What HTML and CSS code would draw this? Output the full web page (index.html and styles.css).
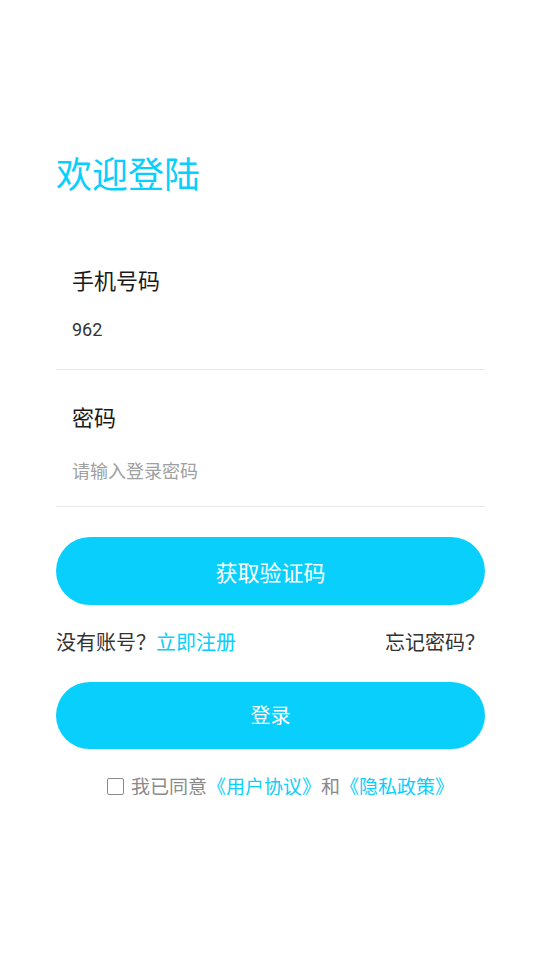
FILE: index.html
```html
<!DOCTYPE html>
<html lang="zh-CN">
<head>
  <meta charset="UTF-8">
  <meta name="viewport" content="width=device-width, initial-scale=1.0">
  <title>欢迎登陆</title>
  <link rel="stylesheet" href="styles.css">
</head>
<body>
  <div class="page">
    <h1 class="title">欢迎登陆</h1>

    <!-- 登录表单 -->
    <form class="login-form">
      <div class="field">
        <label class="field-label" for="phone">手机号码</label>
        <input class="field-input" type="tel" id="phone" value="962">
      </div>
      <div class="field field-pwd">
        <label class="field-label" for="password">密码</label>
        <input class="field-input" type="password" id="password" placeholder="请输入登录密码">
      </div>

      <button type="button" class="btn btn-code">获取验证码</button>

      <div class="links">
        <span>没有账号？<a href="#" class="link">立即注册</a></span>
        <a href="#" class="plain-link">忘记密码？</a>
      </div>

      <button type="submit" class="btn btn-login">登录</button>

      <div class="agree">
        <input type="checkbox" class="agree-check" id="agree">
        <label for="agree" class="agree-text">我已同意<a href="#" class="link">《用户协议》</a>和<a href="#" class="link">《隐私政策》</a></label>
      </div>
    </form>
  </div>
</body>
</html>
```

FILE: styles.css
```css
body {
  margin: 0;
  padding: 0;
  background-color: #fff;
  font-family: "Noto Sans CJK SC", sans-serif;
  color: #222;
}

.page {
  padding: 154px 55px 0 56px;
}

.title {
  margin: 0 0 43px;
  font-size: 36px;
  line-height: 36px;
  font-weight: normal;
  color: #08cffc;
}

.field {
  padding: 35px 16px 16px;
  border-bottom: 1px solid #e8e8e8;
}

.field-label {
  display: block;
  font-size: 22px;
  line-height: 22px;
  color: #1a1a1a;
  margin-bottom: 15px;
}

.field-pwd {
  padding-bottom: 11px;
}

.field-pwd .field-label {
  margin-bottom: 20px;
}

.field-input {
  display: block;
  width: 100%;
  height: 48px;
  padding: 0;
  border: none;
  outline: none;
  background: transparent;
  font-family: Roboto, "Noto Sans CJK SC", sans-serif;
  font-size: 18px;
  line-height: 24px;
  color: #333;
}

.field-input::placeholder {
  color: #a0a0a0;
}

.btn {
  display: block;
  width: 100%;
  border: none;
  border-radius: 34px;
  background-color: #08cffc;
  color: #fff;
  font-family: "Noto Sans CJK SC", sans-serif;
  cursor: pointer;
}

.btn-code {
  height: 68px;
  margin-top: 30px;
  font-size: 22px;
}

.btn-login {
  height: 67px;
  margin-top: 30px;
  padding-bottom: 3px;
  font-size: 20px;
}

.links {
  display: flex;
  justify-content: space-between;
  margin-top: 27px;
  font-size: 20px;
  line-height: 20px;
  color: #333;
}

.link {
  color: #08cffc;
  text-decoration: none;
}

.plain-link {
  color: #333;
  text-decoration: none;
}

.agree {
  display: flex;
  align-items: center;
  margin-top: 27px;
  padding-left: 51px;
  font-size: 19px;
  line-height: 19px;
  color: #8a8a8a;
}

.agree-check {
  appearance: none;
  width: 17px;
  height: 17px;
  margin: 1px 7px 0 0;
  border: 1.5px solid #8a8a8a;
  border-radius: 2px;
  background: #fff;
}
```
